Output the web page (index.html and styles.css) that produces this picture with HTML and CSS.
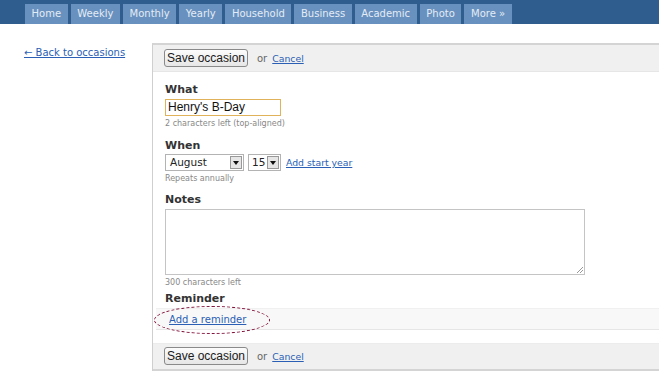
FILE: index.html
```html
<!DOCTYPE html>
<html>
<head>
<meta charset="utf-8">
<link rel="stylesheet" href="styles.css">
</head>
<body>
<nav class="nav">
  <a class="tab">Home</a>
  <a class="tab">Weekly</a>
  <a class="tab">Monthly</a>
  <a class="tab">Yearly</a>
  <a class="tab">Household</a>
  <a class="tab">Business</a>
  <a class="tab">Academic</a>
  <a class="tab">Photo</a>
  <a class="tab">More »</a>
</nav>
<div class="main">
  <div class="side"><a class="link back" href="#">← Back to occasions</a></div>
  <div class="panel">
    <div class="bar">
      <span class="btn">Save occasion</span>
      <span class="or">or</span>
      <a class="link small" href="#">Cancel</a>
    </div>
    <div class="body">
      <div class="field">
        <div class="label">What</div>
        <div class="input">Henry's B-Day</div>
        <div class="hint">2 characters left (top-aligned)</div>
      </div>
      <div class="field when">
        <div class="label">When</div>
        <div class="row">
          <span class="select month"><span class="val">August</span><span class="arrow"></span></span>
          <span class="select day"><span class="val">15</span><span class="arrow"></span></span>
          <a class="link small" href="#">Add start year</a>
        </div>
        <div class="hint">Repeats annually</div>
      </div>
      <div class="field notes">
        <div class="label">Notes</div>
        <div class="textarea"><span class="grip"></span></div>
        <div class="hint">300 characters left</div>
      </div>
      <div class="field last">
        <div class="label">Reminder</div>
        <div class="remrow">
          <a class="link rem" href="#">Add a reminder</a>
          <span class="ellipse"></span>
        </div>
      </div>
    </div>
    <div class="bar bottom">
      <span class="btn">Save occasion</span>
      <span class="or">or</span>
      <a class="link small" href="#">Cancel</a>
    </div>
  </div>
</div>
</body>
</html>
```
FILE: styles.css
```css
html, body { margin: 0; padding: 0; background: #fff; overflow: hidden; }
body { width: 659px; height: 390px; font-family: "DejaVu Sans", Verdana, sans-serif; }

.nav {
  height: 24px;
  background: #2f5d8e;
  display: flex;
  align-items: flex-end;
  padding-left: 25px;
  gap: 3px;
  box-sizing: border-box;
}
.tab {
  height: 20px;
  line-height: 20px;
  background: #6891bf;
  color: #e4ecf5;
  font-size: 10px;
  padding: 0 6.6px;
  box-sizing: border-box;
}

.main { display: flex; }
.side { width: 152px; flex: none; padding: 17px 0 0 24px; box-sizing: border-box; }
.link { color: #2a5fb5; text-decoration: underline; font-size: 10px; }
.back { font-size: 10px; }

.panel {
  margin-top: 19px;
  flex: 1;
  border-left: 1px solid #cfcfcf;
  border-top: 2px solid #d4d4d4;
  min-width: 0;
}
.bar {
  height: 26px;
  background: #f0f0f0;
  border-bottom: 1px solid #e6e6e6;
  display: flex;
  align-items: center;
  padding-left: 11px;
}
.bar.bottom { border-bottom: 2px solid #d4d4d4; border-top: 1px solid #ececec; height: 25px; }
.btn {
  width: 84px;
  height: 18px;
  margin-top: -1px;
  box-sizing: border-box;
  border: 1px solid #8a8a8a;
  border-radius: 3px;
  background: linear-gradient(#fcfcfc, #e6e6e6);
  font-family: "Liberation Sans", Arial, sans-serif;
  font-size: 12px;
  line-height: 16px;
  text-align: center;
  color: #1a1a1a;
}
.or { color: #666; font-size: 10px; margin: 0 4px 0 9px; }

.body { padding: 12px 0 13px 12px; }
.field { margin-bottom: 11px; }
.field.when { margin-bottom: 10px; }
.field.when .label { margin-bottom: 2px; }
.field.notes { margin-bottom: 5px; }
.field.last { margin-bottom: 0; }
.label { font-weight: bold; font-size: 11px; color: #333; line-height: 12px; margin-bottom: 3px; }
.input {
  width: 116px; height: 17px; box-sizing: border-box;
  border: 1px solid #e0b35a;
  font-family: "Liberation Sans", Arial, sans-serif; font-size: 12px;
  line-height: 15px; padding-left: 2px; color: #111;
}
.hint { font-size: 8px; color: #888; margin-top: 2px; line-height: 11px; }
.row { display: flex; align-items: center; gap: 4px; height: 17px; }
.select {
  display: inline-flex; height: 17px; box-sizing: border-box;
  border: 1px solid #b3b3b3; align-items: center; padding: 1px;
}
.select .val { flex: 1; font-family: "DejaVu Sans", sans-serif; font-size: 10.5px; color: #222; padding-left: 3px; line-height: 13px; }
.month { width: 79px; }
.day { width: 33px; }
.day .val { padding-left: 2px; }
.arrow {
  width: 12px; height: 13px; box-sizing: border-box;
  border: 1px solid #999; background: #e6e6e6; position: relative;
}
.arrow::after {
  content: ""; position: absolute; left: 2px; top: 4px;
  border-left: 3px solid transparent; border-right: 3px solid transparent; border-top: 4px solid #111;
}
.small { font-size: 9.3px; margin-left: 1px; }
.textarea {
  width: 420px; height: 66px; box-sizing: border-box;
  border: 1px solid #c4c4c4; position: relative;
}
.grip { position: absolute; right: 1px; bottom: 1px; width: 6px; height: 6px;
  background: linear-gradient(135deg, transparent 45%, #999 45%, #999 55%, transparent 55%, transparent 70%, #999 70%, #999 80%, transparent 80%); }
.remrow {
  margin-left: -9px; height: 20px; background: #f8f8f8;
  border-top: 1px solid #f0f0f0; border-bottom: 1px solid #e6e6e6;
  display: flex; align-items: center; padding-left: 13px; position: relative;
}
.rem { font-size: 10px; }
.ellipse {
  position: absolute; left: -2px; top: -3px; width: 114px; height: 26px;
  border: 1px dashed #80103a; border-radius: 50%;
}
```
